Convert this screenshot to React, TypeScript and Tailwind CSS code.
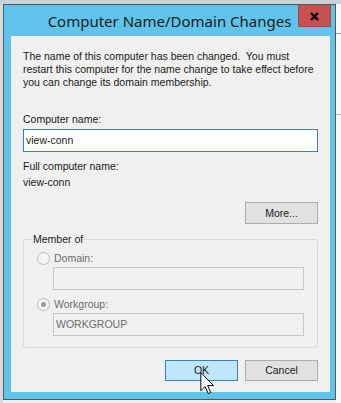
import React from "react";

const body = "font-['Liberation_Sans',Arial,sans-serif] text-[10.5px] leading-[13px] whitespace-nowrap";

function Radio({ checked }: { checked?: boolean }) {
  return (
    <span className="w-[13px] h-[13px] rounded-full border border-[#bcbcbc] bg-[#f4f4f4] flex items-center justify-center">
      {checked && <span className="w-[5px] h-[5px] rounded-full bg-[#9a9a9a]" />}
    </span>
  );
}

function Cursor() {
  return (
    <svg width="17" height="23" viewBox="0 0 12 19" className="absolute left-[188px] top-[336px]">
      <path d="M0.5 0.5 L0.5 15.5 L4 12 L6.6 17.8 L8.6 16.9 L6.1 11.2 L11 11.2 Z" fill="#fff" stroke="#000" strokeWidth="0.8" strokeLinejoin="round" />
    </svg>
  );
}

// red close box of the title bar
function CloseButton() {
  return (
    <svg width="33" height="22" viewBox="0 0 33 22" className="block">
      <rect x="0" y="0" width="33" height="22" fill="#c75050" />
      <rect x="0.5" y="-1" width="32" height="22.5" fill="none" stroke="#a84646" />
      <path d="M13 8 L20 15 M20 8 L13 15" stroke="#000" strokeWidth="2.2" />
    </svg>
  );
}

export default function App() {
  return (
    <div className="w-[341px] h-[403px] bg-[#eceeef] flex flex-col overflow-hidden">
      <div className="h-[4px] bg-[#c9d3d8] shrink-0" />
      <div className="flex flex-1">
        <div className="w-[3px] bg-[#d3dbdf]" />
        <div className="w-[333px] h-[396px] border border-[#4b5960] bg-[#60c4ea] flex flex-col">
          <div className="h-[31px] grid grid-cols-[1fr_auto_1fr]">
            <div />
            <span className="self-center font-['Noto_Sans',sans-serif] text-[15px] text-[#1b1b1b] pt-[1px]">Computer Name/Domain Changes</span>
            <div className="flex justify-end items-start pr-[4px]">
              <CloseButton />
            </div>
          </div>
          <div className={`relative ml-[7px] mr-[5px] h-[356px] bg-[#f0f0f0] px-[12px] pt-[14px] text-[#1a1a1a] ${body}`}>
            <p>
              The name of this computer has been changed.&nbsp; You must
              <br />
              restart this computer for the name change to take effect before
              <br />
              you can change its domain membership.
            </p>
            <div className="mt-[24px]">Computer name:</div>
            <div className="mt-[3px] h-[23px] border border-[#3c7fb1] bg-white flex items-center px-[2px]">view-conn</div>
            <div className="mt-[8px]">Full computer name:</div>
            <div className="mt-[3px]">view-conn</div>
            <div className="mt-[13px] flex justify-end">
              <div className="w-[73px] h-[22px] border border-[#adadad] bg-[#e1e1e1] flex items-center justify-center">More...</div>
            </div>
            <div className="relative mt-[15px] h-[109px] border border-[#d9d9d9] rounded-[3px] pl-[13px] pr-[13px]">
              <span className="absolute left-[8px] -top-[7px] bg-[#f0f0f0] px-[1px]">Member of</span>
              <div className="mt-[12px] flex items-center gap-[4px] text-[#6d6d6d]">
                <Radio />
                <span>Domain:</span>
              </div>
              <div className="mt-[2px] ml-[16px] h-[23px] border border-[#c8c8c8] bg-[#f0f0f0]" />
              <div className="mt-[8px] flex items-center gap-[4px] text-[#6d6d6d]">
                <Radio checked />
                <span>Workgroup:</span>
              </div>
              <div className="mt-[2px] ml-[16px] h-[23px] border border-[#c8c8c8] bg-[#f0f0f0] flex items-center px-[2px] text-[#6d6d6d]">WORKGROUP</div>
            </div>
            <div className="mt-[12px] flex justify-end gap-[7px]">
              <div className="w-[73px] h-[21px] border border-[#3c7fb1] bg-[#bee6fd] flex items-center justify-center">OK</div>
              <div className="w-[73px] h-[21px] border border-[#adadad] bg-[#e1e1e1] flex items-center justify-center">Cancel</div>
            </div>
            <Cursor />
          </div>
        </div>
        <div className="flex-1 bg-[#f7f7f7] flex flex-col">
          <div className="h-[29px]" />
          <div className="h-[1px] bg-[#9a9a9a]" />
          <div className="h-[80px]" />
          <div className="h-[1px] bg-[#b5b5b5]" />
        </div>
      </div>
    </div>
  );
}
